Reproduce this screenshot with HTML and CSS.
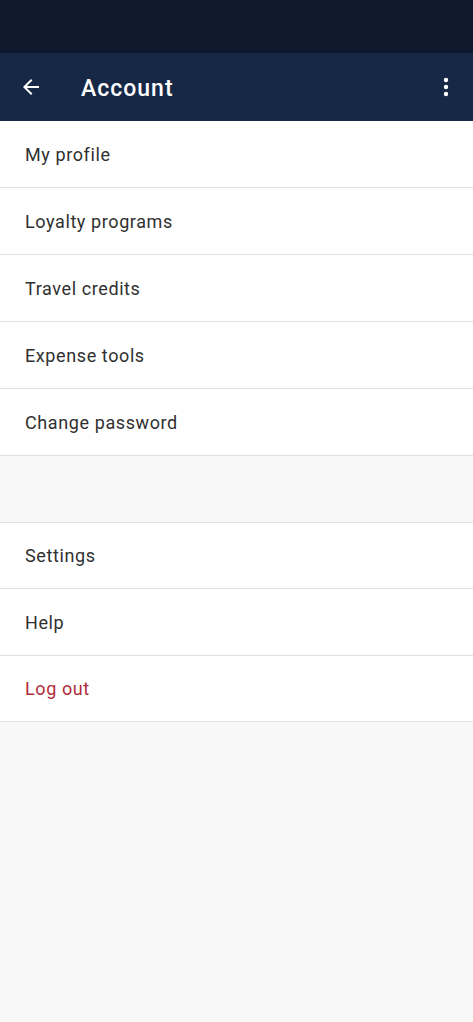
FILE: index.html
```html
<!DOCTYPE html>
<html>
<head>
<meta charset="utf-8">
<link rel="stylesheet" href="styles.css">
</head>
<body>
<div class="status-bar"></div>
<header class="app-bar">
  <svg class="back" width="24" height="24" viewBox="0 0 24 24"><path d="M20 11H7.83l5.59-5.59L12 4l-8 8 8 8 1.41-1.41L7.83 13H20v-2z" fill="#fff"/></svg>
  <h1 class="title">Account</h1>
  <svg class="more" width="24" height="24" viewBox="0 0 24 24"><circle cx="12" cy="5" r="2.2" fill="#fff"/><circle cx="12" cy="12" r="2.2" fill="#fff"/><circle cx="12" cy="19" r="2.2" fill="#fff"/></svg>
</header>
<ul class="group">
  <li class="row">My profile</li>
  <li class="row">Loyalty programs</li>
  <li class="row">Travel credits</li>
  <li class="row">Expense tools</li>
  <li class="row">Change password</li>
</ul>
<div class="spacer"></div>
<ul class="group group-top">
  <li class="row row-compact">Settings</li>
  <li class="row">Help</li>
  <li class="row row-compact logout">Log out</li>
</ul>
</body>
</html>
```
FILE: styles.css
```css
html, body {
  margin: 0;
  padding: 0;
  background: #f8f8f8;
  font-family: Roboto, "Noto Sans", Arial, sans-serif;
}
.status-bar {
  height: 53px;
  background: #0f192d;
}
.app-bar {
  height: 68px;
  background: #172847;
  display: flex;
  align-items: center;
  padding: 0 15px 0 19px;
}
.back {
  width: 24px;
  height: 24px;
}
.title {
  margin: 2px 0 0 38px;
  color: #fff;
  font-size: 23px;
  font-weight: 500;
  flex: 1;
  letter-spacing: 1px;
}
.more {
  width: 24px;
  height: 24px;
}
.group {
  list-style: none;
  margin: 0;
  padding: 0;
  background: #fff;
}
.group-top {
  border-top: 1px solid #e0e0e0;
}
.row {
  height: 66px;
  border-bottom: 1px solid #e0e0e0;
  display: flex;
  align-items: center;
  padding-left: 25px;
  font-size: 18px;
  letter-spacing: 0.6px;
  color: #303030;
}
.row-compact {
  height: 65px;
}
.logout {
  color: #b22c39;
}
.spacer {
  height: 66px;
}
```
